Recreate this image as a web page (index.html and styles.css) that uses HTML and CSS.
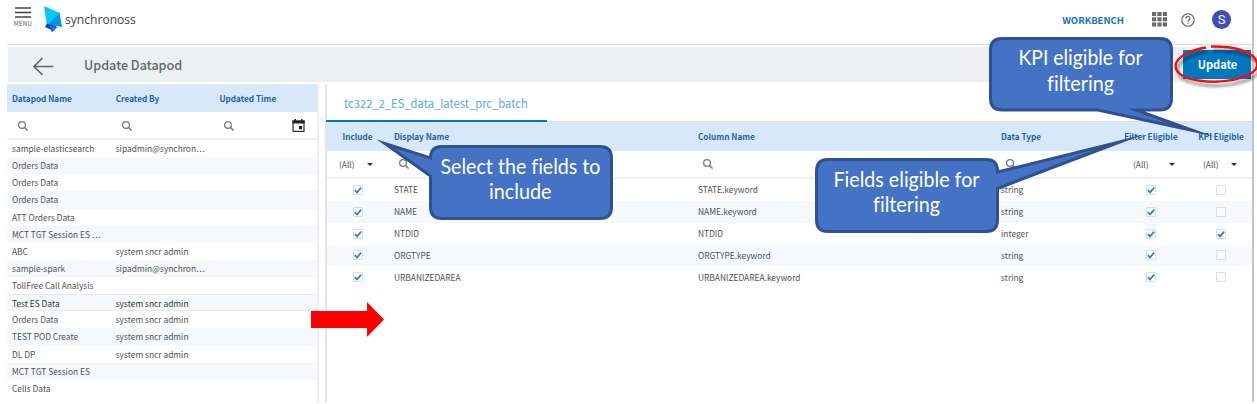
FILE: index.html
```html
<!DOCTYPE html>
<html lang="en">
<head>
<meta charset="utf-8">
<title>Update Datapod</title>
<link rel="stylesheet" href="styles.css">
</head>
<body>
<svg class="defs" width="0" height="0">
  <symbol id="search" viewBox="0 0 10 10"><circle cx="4" cy="4" r="3.4" fill="none" stroke="#777" stroke-width="1.2"/><path d="M6.3 6.3 9.6 9.6" stroke="#777" stroke-width="1.5"/></symbol>
  <symbol id="tick" viewBox="0 0 10 10"><path d="M1.8 5.1 4 7.4 8.2 2.6" fill="none" stroke="#1a87cf" stroke-width="1.7"/></symbol>
</svg>
<div class="app">
  <header class="top">
    <div class="menu"><svg width="16" height="11"><path d="M0 1h16M0 5.5h16M0 10h16" stroke="#444" stroke-width="1.4"/></svg><span>MENU</span></div>
    <svg class="logo" width="19" height="28" viewBox="0 0 19 28"><path d="M0 0 17 7.5 3 20Z" fill="#08c8ee"/><path d="M15.5 7 18 21 4 18.5Z" fill="#0a95dc"/><path d="M3 17.5 10 19.5 12.5 20 8 26 6.5 23.5 1 21Z" fill="#0b3fd0"/><path d="M6 20 13.5 21 8 26.5Z" fill="#0878ee"/></svg>
    <span class="brand">synchronoss</span>
    <span class="workbench">WORKBENCH</span>
    <svg class="apps" width="15" height="15"><path d="M0 2h15M0 7.3h15M0 12.6h15" stroke="#696969" stroke-width="4" stroke-dasharray="4.2 1.2"/></svg>
    <svg class="help" width="14" height="14" viewBox="0 0 14 14"><circle cx="7" cy="7" r="6.2" fill="none" stroke="#555" stroke-width="1.1"/><path d="M5 5.5C5 2.8 9 2.9 9 5.3 9 6.8 7 6.8 7 8.7M7 9.8v1.2" fill="none" stroke="#555" stroke-width="1.1"/></svg>
    <span class="avatar">S</span>
  </header>
  <div class="titlebar">
    <svg width="21" height="19" viewBox="0 0 21 19"><path d="M20.5 9.5H1M9.5 1 1 9.5 9.5 18" fill="none" stroke="#666" stroke-width="1.7"/></svg>
    <h1>Update Datapod</h1>
    <button class="update">Update</button>
  </div>
  <main class="main">
    <section class="pods">
      <div class="prow phead"><span>Datapod Name</span><span>Created By</span><span>Updated Time</span></div>
      <div class="prow pfilter"><span><svg class="s"><use href="#search"/></svg></span><span><svg class="s"><use href="#search"/></svg></span><span class="datef"><svg class="s"><use href="#search"/></svg><svg class="cal" width="13" height="13" viewBox="0 0 13 13"><path d="M1 2h11v10.3H1Z" fill="none" stroke="#333" stroke-width="1.2"/><path d="M.4 1.4h12.2v3H.4ZM2.5 0h1.5v2H2.5ZM9 0h1.500v2H9ZM7 7h3.200v3.200H7Z" fill="#222"/></svg></span></div>
      <div class="prow"><span>sample-elasticsearch</span><span>sipadmin@synchron…</span></div>
      <div class="prow alt"><span>Orders Data</span></div>
      <div class="prow"><span>Orders Data</span></div>
      <div class="prow alt"><span>Orders Data</span></div>
      <div class="prow"><span>ATT Orders Data</span></div>
      <div class="prow alt"><span>MCT TGT Session ES …</span></div>
      <div class="prow"><span>ABC</span><span>system sncr admin</span></div>
      <div class="prow alt"><span>sample-spark</span><span>sipadmin@synchron…</span></div>
      <div class="prow"><span>TollFree Call Analysis</span></div>
      <div class="prow alt hover"><span>Test ES Data</span><span>system sncr admin</span></div>
      <div class="prow"><span>Orders Data</span><span>system sncr admin</span></div>
      <div class="prow alt"><span>TEST POD Create</span><span>system sncr admin</span></div>
      <div class="prow"><span>DL DP</span><span>system sncr admin</span></div>
      <div class="prow alt"><span>MCT TGT Session ES</span></div>
      <div class="prow"><span>Cells Data</span></div>
    </section>
    <section class="detail">
      <div class="tabs"><div class="tab">tc322_2_ES_data_latest_prc_batch</div></div>
      <div class="frow fhead"><span class="c">Include</span><span>Display Name</span><span>Column Name</span><span>Data Type</span><span class="c">Filter Eligible</span><span class="c">KPI Eligible</span></div>
      <div class="frow ffilter"><span class="all">(All)<i></i></span><span><svg class="s"><use href="#search"/></svg></span><span><svg class="s"><use href="#search"/></svg></span><span><svg class="s"><use href="#search"/></svg></span><span class="all wide">(All)<i></i></span><span class="all kpi">(All)<i></i></span></div>
      <div class="frow"><span class="c"><b class="box"><svg><use href="#tick"/></svg></b></span><span>STATE</span><span>STATE.keyword</span><span>string</span><span class="c"><b class="box"><svg><use href="#tick"/></svg></b></span><span class="c"><b class="box"></b></span></div>
      <div class="frow alt"><span class="c"><b class="box"><svg><use href="#tick"/></svg></b></span><span>NAME</span><span>NAME.keyword</span><span>string</span><span class="c"><b class="box"><svg><use href="#tick"/></svg></b></span><span class="c"><b class="box"></b></span></div>
      <div class="frow"><span class="c"><b class="box"><svg><use href="#tick"/></svg></b></span><span>NTDID</span><span>NTDID</span><span>integer</span><span class="c"><b class="box"><svg><use href="#tick"/></svg></b></span><span class="c"><b class="box"><svg><use href="#tick"/></svg></b></span></div>
      <div class="frow alt"><span class="c"><b class="box"><svg><use href="#tick"/></svg></b></span><span>ORGTYPE</span><span>ORGTYPE.keyword</span><span>string</span><span class="c"><b class="box"><svg><use href="#tick"/></svg></b></span><span class="c"><b class="box"></b></span></div>
      <div class="frow"><span class="c"><b class="box"><svg><use href="#tick"/></svg></b></span><span>URBANIZEDAREA</span><span>URBANIZEDAREA.keyword</span><span>string</span><span class="c"><b class="box"><svg><use href="#tick"/></svg></b></span><span class="c"><b class="box"></b></span></div>
    </section>
  </main>
</div>
<svg class="notes" width="1257" height="404" viewBox="0 0 1257 404">
  <defs><filter id="sh" x="-20%" y="-20%" width="140%" height="160%"><feDropShadow dx="2" dy="4" stdDeviation="1.8" flood-color="#000" flood-opacity=".45"/></filter></defs>
  <path d="M311 311H367V302L384 319.500 367 337V328H311Z" fill="#f00"/>
  <g fill="#4472c4" stroke="#2f528f" stroke-width="3" stroke-linejoin="miter" stroke-miterlimit="20">
    <path d="M442 146.500H600Q611.500 146.500 611.500 158V207Q611.500 218.500 600 218.500H442Q430.500 218.500 430.500 207V176L385 143.500 430.500 158Q430.500 146.500 442 146.500Z"/>
    <path d="M1002 38.500H1160Q1171.500 38.500 1171.500 50V98.500Q1171.500 110 1160 110H1136L1193 130.500 1098 110H1002Q990.500 110 990.500 98.500V50Q990.500 38.500 1002 38.500Z"/>
    <path d="M828 159.500H986Q997.500 159.500 997.500 171V172L1121 141.500 997.500 188.500V220Q997.500 231.500 986 231.500H828Q816.500 231.500 816.500 220V171Q816.500 159.500 828 159.500Z"/>
  </g>
  <g class="note-text">
    <text x="440.500" y="173.500" textLength="160" lengthAdjust="spacingAndGlyphs">Select the fields to</text>
    <text x="489" y="199" textLength="62.500" lengthAdjust="spacingAndGlyphs">include</text>
    <text x="1018.500" y="65" textLength="124" lengthAdjust="spacingAndGlyphs">KPI eligible for</text>
    <text x="1047" y="90.500" textLength="67" lengthAdjust="spacingAndGlyphs">filtering</text>
    <text x="833.500" y="186.500" textLength="146" lengthAdjust="spacingAndGlyphs">Fields eligible for</text>
    <text x="873" y="212" textLength="67" lengthAdjust="spacingAndGlyphs">filtering</text>
  </g>
  <path d="M1206 47.500C1168 54 1166 76 1198 80.500 1230 85 1260 75 1257 63 1254 50 1230 46 1211 46.500" fill="none" stroke="#f4110f" stroke-width="2.400" filter="url(#sh)"/>
</svg>
</body>
</html>
```
FILE: styles.css
```css
* { box-sizing: border-box; }
body { margin: 0; width: 1257px; height: 404px; overflow: hidden; position: relative; background: #fff; color: #505050; font: 8.4px/17px "Noto Sans CJK SC", "Noto Sans", sans-serif; }
.defs { position: absolute; }
.app { width: 1254px; height: 402px; padding: 0 0 0 7px; border-right: 2px solid #c4c4c4; }
.top { height: 45px; display: flex; align-items: center; border-bottom: 1px solid #d8dad8; padding: 0 21px 5px 7px; }
.menu { display: flex; flex-direction: column; align-items: center; width: 18px; height: 28px; padding-top: 1px; font-size: 6px; line-height: 11px; letter-spacing: .35px; }
.menu svg { flex: none; }
.logo { margin: 0 0 0 12px; }
.brand { margin: 0 auto 0 2px; font: 12.1px/16px "Open Sans", sans-serif; color: #444; }
.workbench { color: #1672bb; font-size: 9.5px; font-weight: 700; margin-right: 28px; padding-top: 1px; }
.apps { margin-right: 14px; }
.help { margin-right: 17px; }
.avatar { width: 19px; height: 19px; border-radius: 50%; background: #3f4db4; color: #fff; text-align: center; font: 13px/19px Roboto, sans-serif; }
.titlebar { margin: 2px 1px 0; height: 35px; background: #ecf0f3; display: flex; align-items: center; padding: 0 0 0 25px; }
.titlebar svg { margin-top: 3px; }
h1 { margin: 1px auto 0 30px; font-size: 12.6px; line-height: 20px; font-weight: 500; color: #666; }
.update { border: 0; padding: 0 0 0 1px; width: 68px; height: 29px; background: #0277bd; color: #fff; font: 700 11px/29px "Noto Sans CJK SC", sans-serif; }
.main { display: flex; gap: 6px; padding-top: 2px; height: 320px; }
.pods { width: 313px; border-right: 2px solid #eee; }
.prow { display: grid; grid-template-columns: 103.700px 103.700px 1fr; height: 17.140px; align-items: center; padding-left: 5px; white-space: nowrap; }
.alt { background: #f5f9fc; }
.phead { height: 28px; background: #d7e9f9; color: #1f5dac; font-weight: 700; font-size: 8.2px; }
.pfilter { height: 28px; border-bottom: 2px solid #eee; }
.pfilter span { padding: 1px 0 0 6px; display: flex; align-items: center; }
.pfilter .datef { justify-content: space-between; padding-left: 5px; padding-right: 12px; }
.hover { border-top: 1px solid #e8e8e8; border-bottom: 1px solid #e8e8e8; color: #333; }
.s { width: 10px; height: 10px; display: block; }
.detail { width: 927px; border-left: 2px solid #e4e4e4; }
.tabs { height: 38px; border-bottom: 1px solid #ddd; }
.tab { margin-left: -1px; width: 221px; height: 38px; border-bottom: 2px solid #0277bd; padding-left: 18px; font-size: 11.2px; line-height: 38px; color: #5ba9da; white-space: nowrap; }
.frow { display: grid; grid-template-columns: 61px 304px 303px 117px 78px 62px; height: 21.850px; align-items: center; }
.frow > span { padding-left: 6px; white-space: nowrap; }
.frow > .c { padding: 0; text-align: center; display: flex; justify-content: center; }
.fhead { height: 29px; background: #d7e9f9; color: #1f5dac; font-weight: 700; font-size: 8.2px; }
.ffilter { height: 28px; border-bottom: 2px solid #eee; }
.ffilter .s { margin-left: 5px; }
.frow > .all { display: flex; align-items: center; padding-left: 12px; gap: 12px; }
.frow > .wide { padding-left: 21px; gap: 20px; }
.frow > .kpi { padding-left: 13px; gap: 12px; }
.all i { border: 3px solid transparent; border-top: 3.500px solid #333; border-bottom: 0; }
.box { width: 10px; height: 10px; border: 1px solid #ddd; border-radius: 1px; background: #fff; display: block; }
.box svg { display: block; width: 10px; height: 10px; margin: -1px; }
.notes { position: absolute; left: 0; top: 0; }
.note-text { font: 20.400px Lato, sans-serif; fill: #fff; font-variant-ligatures: none; }
```
